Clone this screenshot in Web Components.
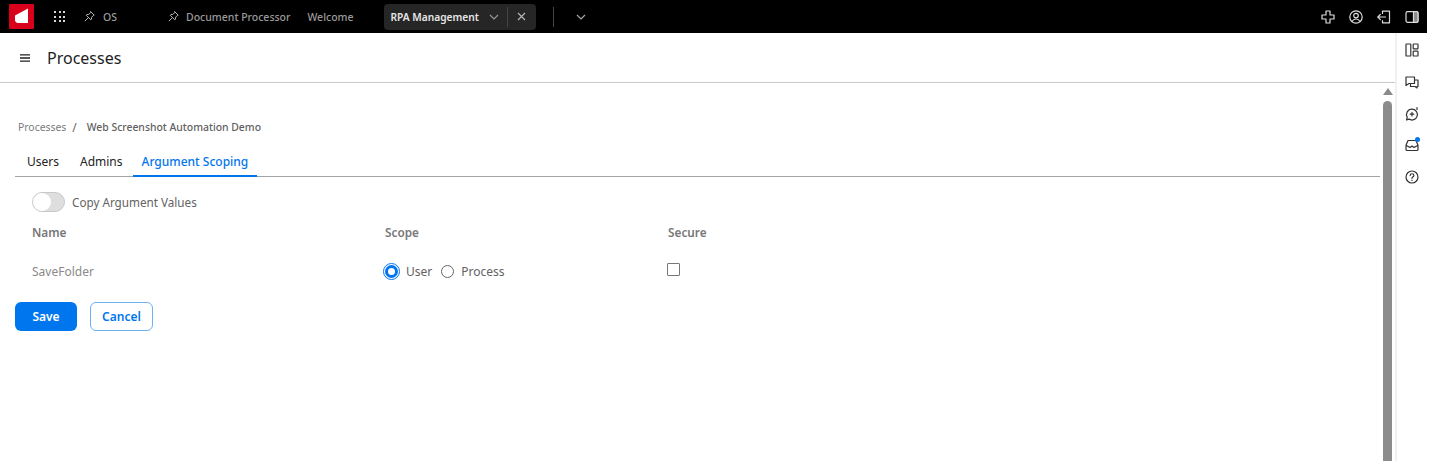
<!DOCTYPE html>
<html>
<head>
<meta charset="utf-8">
<title>Processes</title>
<style>
  html, body { margin: 0; background: #fff; }
  body { font-family: "Noto Sans", sans-serif; overflow: hidden; }
</style>
</head>
<body>
<app-shell>
  <top-bar slot="top"></top-bar>
  <page-header slot="header" title="Processes"></page-header>
  <process-form slot="main"></process-form>
  <side-rail slot="rail"></side-rail>
</app-shell>

<script>
const SVG_OPEN = '<svg width="16" height="16" viewBox="0 0 16 16" fill="none" stroke="currentColor" stroke-width="1.2" stroke-linejoin="round" stroke-linecap="round">';
const PIN = '<path d="M9.6 2.2 13.8 6.4 12.7 6.8 10.6 8.9 10.4 11.4 9.5 12 4 6.5 4.8 5.6 7.2 5.4 9.2 3.3ZM6.4 9.6 2.6 13.4"/>';

class AppShell extends HTMLElement {
  constructor() {
    super();
    this.attachShadow({ mode: 'open' });
    this.shadowRoot.innerHTML = `
      <style>
        :host { display: grid; width: 1427px; height: 461px; grid-template-columns: 1fr 32px; grid-template-rows: 33px 50px 1fr; }
        .top { grid-column: 1 / 3; }
        .rail { grid-column: 2; grid-row: 2 / 4; border-left: 2px solid #f1f1f1; }
        .header { grid-column: 1; grid-row: 2; border-bottom: 1px solid #c9c9c9; }
        .main { grid-column: 1; grid-row: 3; display: flex; min-height: 0; }
      </style>
      <div class="top"><slot name="top"></slot></div>
      <div class="header"><slot name="header"></slot></div>
      <div class="main"><slot name="main"></slot></div>
      <div class="rail"><slot name="rail"></slot></div>
    `;
  }
}

class TopBar extends HTMLElement {
  constructor() {
    super();
    this.attachShadow({ mode: 'open' });
    this.shadowRoot.innerHTML = `
      <style>
        :host { display: flex; align-items: center; height: 33px; background: #000; color: #9a9a9a; font-size: 10.5px; font-weight: 500; }
        .logo { width: 25px; height: 25px; margin: 0 0 0 9px; border-radius: 1px; background: #d9001b; display: flex; align-items: center; justify-content: center; flex: none; }
        .dots { margin-left: 20px; width: 11px; height: 11px; display: grid; grid-template-columns: repeat(3, 2px); grid-auto-rows: 2px; gap: 2.5px; }
        .dots i { background: #d8d8d8; }
        .pin { display: flex; color: #bdbdbd; }
        .os { margin-left: 18px; display: flex; align-items: center; gap: 7px; }
        .doc { margin-left: 50px; display: flex; align-items: center; gap: 6px; }
        .welcome { margin-left: 17px; }
        .tab { margin-left: 30px; width: 152px; height: 26px; box-sizing: border-box; background: #262626; border-radius: 4px; display: flex; align-items: center; color: #e6e6e6; font-size: 10.2px; font-weight: 600; padding-left: 7px; }
        .tab span { flex: 1; white-space: nowrap; }
        .tab .chev { margin-right: 7px; color: #9a9a9a; display: flex; }
        .tab .x { width: 28px; height: 20px; border-left: 1px solid #444; display: flex; align-items: center; justify-content: center; color: #b5b5b5; }
        .sep { margin-left: 17px; width: 1px; height: 20px; background: #444; }
        .more { margin-left: 21px; display: flex; color: #a8a8a8; }
        .right { margin-left: auto; margin-right: 7px; display: flex; gap: 12px; color: #dcdcdc; }
        svg { display: block; }
      </style>
      <div class="logo"><svg width="17" height="17" viewBox="0 0 17 17"><path d="M15 .5V15H4L2 13V7.500Z" fill="#fff"/></svg></div>
      <div class="dots"><i></i><i></i><i></i><i></i><i></i><i></i><i></i><i></i><i></i></div>
      <div class="os"><span class="pin">${SVG_OPEN.replace('width="16" height="16"', 'width="13" height="13"')}${PIN}</svg></span><span>OS</span></div>
      <div class="doc"><span class="pin">${SVG_OPEN.replace('width="16" height="16"', 'width="13" height="13"')}${PIN}</svg></span><span>Document Processor</span></div>
      <div class="welcome">Welcome</div>
      <div class="tab"><span>RPA Management</span>
        <div class="chev"><svg width="12" height="12" viewBox="0 0 12 12" fill="none" stroke="currentColor" stroke-width="1.1"><path d="M2 4 6 8 10 4"/></svg></div>
        <div class="x"><svg width="11" height="11" viewBox="0 0 11 11" fill="none" stroke="currentColor" stroke-width="1.2"><path d="M2 2 9 9M9 2 2 9"/></svg></div>
      </div>
      <div class="sep"></div>
      <div class="more"><svg width="12" height="12" viewBox="0 0 12 12" fill="none" stroke="currentColor" stroke-width="1.2"><path d="M2 4 6 8 10 4"/></svg></div>
      <div class="right">
        ${SVG_OPEN}<path d="M6 2h4v4h4v4h-4v4H6v-4H2V6h4Z"/></svg>
        ${SVG_OPEN}<circle cx="8" cy="8" r="6.2"/><circle cx="8" cy="6.6" r="2.3"/><path d="M4 12.6c1-2 2.4-2.6 4-2.6s3 .6 4 2.6"/></svg>
        ${SVG_OPEN}<path d="M6.5 4.5V2.200h7v11.600h-7v-2.300M9.500 8H1.800M4.400 5.400 1.800 8l2.600 2.600"/></svg>
        ${SVG_OPEN}<rect x="2" y="2.600" width="12" height="10.800" rx="1.600"/><path d="M9.500 2.600h3A1.500 1.500 0 0 1 14 4.100v7.800a1.500 1.500 0 0 1-1.500 1.500h-3Z" fill="#8a8a8a"/></svg>
      </div>
    `;
  }
}

class PageHeader extends HTMLElement {
  constructor() {
    super();
    this.attachShadow({ mode: 'open' });
    this.shadowRoot.innerHTML = `
      <style>
        :host { display: flex; align-items: center; height: 49px; color: #222; }
        svg { margin-left: 20px; display: block; }
        h1 { margin: 0 0 0 17px; font-size: 16px; font-weight: 400; }
      </style>
      <svg width="10" height="8" viewBox="0 0 10 8" stroke="currentColor" stroke-width="1.3"><path d="M0 .8h10M0 4h10M0 7.200h10"/></svg>
      <h1>${this.getAttribute('title')}</h1>
    `;
  }
}

class BreadCrumb extends HTMLElement {
  constructor() {
    super();
    this.attachShadow({ mode: 'open' });
    this.shadowRoot.innerHTML = `
      <style>
        :host { display: flex; align-items: center; height: 16px; font-size: 10.4px; color: #7b7b7b; white-space: nowrap; }
        .sep { margin: 0 10px 0 6px; font-size: 12px; color: #666; }
        b { font-weight: 500; color: #5f5f5f; }
      </style>
      <span>Processes</span><span class="sep">/</span><b>Web Screenshot Automation Demo</b>
    `;
  }
}

class TabStrip extends HTMLElement {
  constructor() {
    super();
    this.attachShadow({ mode: 'open' });
    this.shadowRoot.innerHTML = `
      <style>
        :host { display: flex; height: 30px; box-sizing: border-box; border-bottom: 1px solid #a3a3a8; font-size: 12px; color: #222; }
        div { padding: 0 9px; height: 30px; box-sizing: border-box; display: flex; align-items: center; white-space: nowrap; padding-bottom: 2px; }
        .users { padding: 0 11px 2px 12px; }
        .admins { padding: 0 10px 2px 10px; }
        .on { color: #0076ee; border-bottom: 2px solid #0076ee; padding-bottom: 0; font-weight: 500; }
      </style>
      <div class="users">Users</div><div class="admins">Admins</div><div class="on">Argument Scoping</div>
    `;
  }
}

class ToggleSwitch extends HTMLElement {
  constructor() {
    super();
    this.attachShadow({ mode: 'open' });
    this.shadowRoot.innerHTML = `
      <style>
        :host { display: inline-flex; align-items: center; gap: 7px; font-size: 11.7px; color: #636363; }
        .track { width: 33px; height: 20px; box-sizing: border-box; border-radius: 10px; background: #dedede; border: 1px solid #c9c9c9; position: relative; }
        .knob { position: absolute; left: 0; top: 0; width: 18px; height: 18px; border-radius: 50%; background: #fff; }
      </style>
      <div class="track"><div class="knob"></div></div><slot></slot>
    `;
  }
}

class RadioOption extends HTMLElement {
  constructor() {
    super();
    this.attachShadow({ mode: 'open' });
    const on = this.hasAttribute('checked');
    this.shadowRoot.innerHTML = `
      <style>
        :host { display: inline-flex; align-items: center; gap: 7px; font-size: 12px; color: #636363; }
        :host([checked]) { gap: 8px; }
        .dot { width: 13px; height: 13px; box-sizing: border-box; border-radius: 50%; border: 1px solid #666; background: #fff; }
        .dot.on { border: 3px solid #0076ee; outline: 1px solid #0076ee; outline-offset: 1px; }
      </style>
      <div class="dot ${on ? 'on' : ''}"></div><slot></slot>
    `;
  }
}

class ProcessForm extends HTMLElement {
  constructor() {
    super();
    this.attachShadow({ mode: 'open' });
    this.shadowRoot.innerHTML = `
      <style>
        :host { display: flex; flex: 1; min-width: 0; }
        .body { flex: 1; min-width: 0; padding: 36px 0 0 15px; display: flex; flex-direction: column; }
        bread-crumb { margin: 0 0 0 3px; }
        tab-strip { margin-top: 12px; }
        toggle-switch { margin: 15px 0 0 17px; align-self: flex-start; }
        .grid { margin: 5px 0 0 17px; display: grid; grid-template-columns: 353px 283px 1fr; font-size: 12px; color: #757575; }
        .head { font-weight: 600; font-size: 11.8px; height: 30px; display: flex; align-items: center; color: #777; }
        .cell { height: 48px; display: flex; align-items: center; }
        .name { color: #8a8a8a; }
        .scope { display: flex; gap: 9px; align-items: center; margin-left: 0; }
        .check { width: 13px; height: 13px; box-sizing: border-box; border: 1px solid #777; border-radius: 1px; margin: -3px 0 0 -1px; }
        .actions { display: flex; gap: 13px; margin-top: 7px; }
        button { font: 600 12px "Noto Sans", sans-serif; height: 29px; border-radius: 6px; box-sizing: border-box; padding: 0; }
        .save { width: 62px; background: #0076ee; color: #fff; border: 0; }
        .cancel { width: 63px; background: #fff; color: #0076ee; border: 1px solid #6db1f5; }
        .scrollbar { width: 15px; flex: none; display: flex; flex-direction: column; align-items: center; }
        .up { width: 0; height: 0; margin-top: 5px; border: 5px solid transparent; border-top: 0; border-bottom: 7px solid #8a8a8a; }
        .thumb { flex: 1; width: 9px; margin-top: 6px; background: #8c8c8c; border-radius: 5px 5px 0 0; }
      </style>
      <div class="body">
        <bread-crumb></bread-crumb>
        <tab-strip></tab-strip>
        <toggle-switch>Copy Argument Values</toggle-switch>
        <div class="grid">
          <div class="head">Name</div><div class="head">Scope</div><div class="head">Secure</div>
          <div class="cell name">SaveFolder</div>
          <div class="cell"><div class="scope"><radio-option checked>User</radio-option><radio-option>Process</radio-option></div></div>
          <div class="cell"><div class="check"></div></div>
        </div>
        <div class="actions"><button class="save">Save</button><button class="cancel">Cancel</button></div>
      </div>
      <div class="scrollbar"><div class="up"></div><div class="thumb"></div></div>
    `;
  }
}

class SideRail extends HTMLElement {
  constructor() {
    super();
    this.attachShadow({ mode: 'open' });
    this.shadowRoot.innerHTML = `
      <style>
        :host { display: flex; flex-direction: column; align-items: center; gap: 15.8px; padding-top: 9px; color: #333; }
        svg { display: block; }
        .bell { position: relative; }
        .badge { position: absolute; right: 0; top: 0; width: 5px; height: 5px; border-radius: 50%; background: #0076ee; }
      </style>
      ${SVG_OPEN}<rect x="2" y="2" width="4.800" height="12" rx=".6"/><rect x="9.200" y="2" width="4.800" height="4.800" rx=".6"/><rect x="9.200" y="9.200" width="4.800" height="4.800" rx=".6"/></svg>
      ${SVG_OPEN}<path d="M2 3h8.500v6.500H5L2 11.500ZM10.500 6H14v6.500h-1v1.500l-2-1.500H6.500v-3"/></svg>
      ${SVG_OPEN}<path d="M8 3.200a5.400 5.400 0 1 1-3 9.900L2.500 14l.8-2.600A5.400 5.400 0 0 1 8 3.200ZM8 6.400v3.600M6.200 8.200h3.600M13 1.500v2"/></svg>
      <div class="bell">${SVG_OPEN}<path d="M2 8.200 4 3.500h8l2 4.700v4.300a1 1 0 0 1-1 1H3a1 1 0 0 1-1-1ZM2 8.200l4 2.300L8 9l2 1.500 4-2.300"/></svg><div class="badge"></div></div>
      ${SVG_OPEN}<circle cx="8" cy="8" r="6"/><path d="M6.200 6.400c0-2.200 3.700-2.200 3.700 0 0 1.300-1.900 1.500-1.900 2.900M8 11v.4"/></svg>
    `;
  }
}

customElements.define('app-shell', AppShell);
customElements.define('top-bar', TopBar);
customElements.define('page-header', PageHeader);
customElements.define('bread-crumb', BreadCrumb);
customElements.define('tab-strip', TabStrip);
customElements.define('toggle-switch', ToggleSwitch);
customElements.define('radio-option', RadioOption);
customElements.define('process-form', ProcessForm);
customElements.define('side-rail', SideRail);
</script>
</body>
</html>
